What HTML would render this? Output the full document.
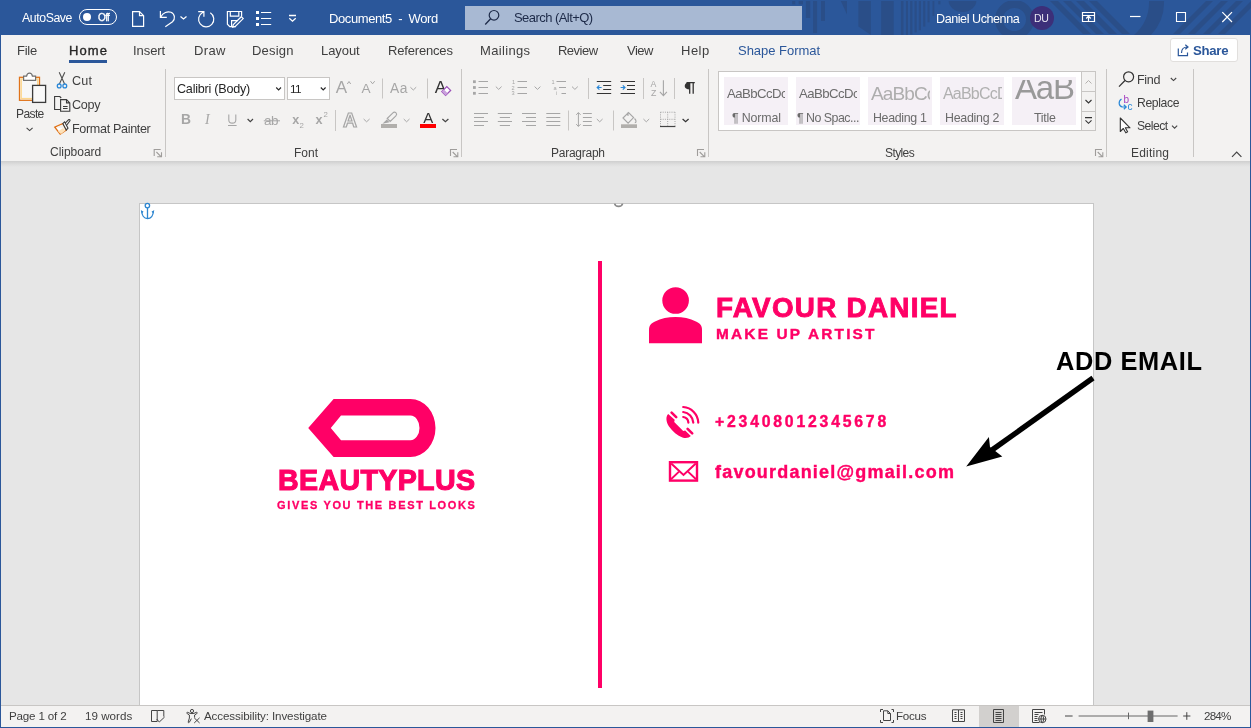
<!DOCTYPE html>
<html><head><meta charset="utf-8"><style>
*{box-sizing:border-box}
html,body{margin:0;padding:0;width:1251px;height:728px;overflow:hidden;background:#e6e6e6;font-family:"Liberation Sans",sans-serif;position:relative}
.a{position:absolute}
.t{position:absolute;white-space:pre;line-height:normal;font-family:"Liberation Sans",sans-serif;will-change:transform}
svg{position:absolute;overflow:visible}
</style></head><body>
<!-- base regions -->
<div class="a" style="left:0;top:0;width:1251px;height:35px;background:#2b579a"></div>
<div class="a" style="left:0;top:35px;width:1251px;height:126px;background:#f3f2f1"></div>
<div class="a" style="left:0;top:161px;width:1251px;height:6px;background:linear-gradient(rgba(0,0,0,0.1),rgba(0,0,0,0.03) 60%,rgba(0,0,0,0))"></div>
<div class="a" style="left:139px;top:203px;width:955px;height:520px;background:#fff;border:1px solid #c6c6c6"></div>
<div class="a" style="left:0;top:705px;width:1251px;height:23px;background:#f3f2f1;border-top:1px solid #c8c6c4"></div>
<div class="a" style="left:0;top:727px;width:1251px;height:1px;background:#2b579a"></div>
<div class="a" style="left:0;top:34px;width:1px;height:694px;background:#2b579a"></div>
<div class="a" style="left:1250px;top:34px;width:1px;height:694px;background:#2b579a"></div>

<!-- title bar pattern -->
<svg style="left:0;top:0" width="1251" height="35" viewBox="0 0 1251 35">
 <defs><clipPath id="tb"><rect x="0" y="1" width="1251" height="34"/></clipPath></defs>
 <g clip-path="url(#tb)" fill="#2a4e88">
  <rect x="792.2" y="0" width="3" height="4.3"/>
  <rect x="798.7" y="0" width="4.3" height="4.3"/>
  <rect x="805.9" y="0" width="4.3" height="18"/>
  <rect x="813.1" y="0" width="4" height="33"/>
  <rect x="821" y="0" width="3.9" height="21"/>
  <path d="M840.4 0 H847 V14.4 Z"/>
  <path d="M858.4 0 H870.9 V35 L858.4 26.6 Z"/>
  <rect x="881.2" y="0" width="12.5" height="35"/>
  <rect x="900.9" y="0" width="2.6" height="35"/>
  <rect x="905.9" y="0" width="2.1" height="35"/>
  <rect x="910.2" y="0" width="2.2" height="34.5"/>
  <rect x="914.5" y="0" width="2.2" height="32.4"/>
  <rect x="918.8" y="0" width="2.2" height="30.2"/>
  <rect x="923.2" y="0" width="2.1" height="26.6"/>
  <rect x="927.5" y="0" width="2.1" height="22.3"/>
  <rect x="932.5" y="0" width="1.8" height="15.8"/>
  <rect x="938.3" y="0" width="2.1" height="4.3"/>
  <path d="M948.5 0 A14 12 0 0 0 976.5 0 Z"/>
  <circle cx="1014.5" cy="19.5" r="15.5" fill="none" stroke="#2a4e88" stroke-width="8"/>
  <path d="M1049 0 L1057 0 L1091 34 L1083 34 Z"/>
  <path d="M1062 0 L1070 0 L1104 34 L1096 34 Z"/>
  <path d="M1075 0 L1083 0 L1117 34 L1109 34 Z"/>
  <path d="M1088 0 L1096 0 L1130 34 L1122 34 Z"/>
  <path d="M1164 0 A48 48 0 0 1 1151 35 L1134 35 A44 44 0 0 0 1149 0 Z"/>
  <path d="M1173 34 L1207 0 L1214 0 L1180 34 Z"/>
  <path d="M1188 34 L1222 0 L1229 0 L1195 34 Z"/>
  <path d="M1203 34 L1237 0 L1244 0 L1210 34 Z"/>
  <path d="M1218 34 L1252 0 L1259 0 L1225 34 Z"/>
 </g>
</svg>
<!-- search box -->
<div class="a" style="left:465px;top:6px;width:337px;height:24px;background:#a8b9d3"></div>
<div class="a" style="left:1030px;top:6px;width:24px;height:24px;border-radius:50%;background:#3c2f79"></div>
<!-- toggle -->
<div class="a" style="left:79px;top:9px;width:38px;height:16px;border:1.2px solid #fff;border-radius:8px"></div>
<div class="a" style="left:82.5px;top:12.8px;width:8.5px;height:8.5px;border-radius:50%;background:#fff"></div>
<svg style="left:0;top:0" width="1251" height="35" viewBox="0 0 1251 35" fill="none" stroke="#fff" stroke-width="1.2">
 <!-- new doc -->
 <path d="M132.6 11.6 H139.5 L143.6 15.7 V26.4 H132.6 Z M139.5 11.6 V15.7 H143.6"/>
 <!-- undo -->
 <path d="M160.4 11 V17.3 H166.8 M160.9 16.8 C 163 12.8 167.5 10.8 171 12.3 C 175 14 175.5 19 172.5 21.8 L165.3 26.8"/>
 <path d="M180.5 16.5 L183.5 19 L186.5 16.5"/>
 <!-- redo -->
 <path d="M198.2 11.6 H203.9 V16.8 M203.4 12.1 L202.6 12.5 A7.6 7.6 0 1 0 210.3 12.8"/>
 <!-- save with pen -->
 <path d="M236 26.6 H229.8 L227.4 24.2 V11.5 H241.6 V16.6 M230.3 11.5 V16.2 H238.8 V11.5 M231.6 26.4 V20.6 H237.6"/>
 <path d="M241.3 16.7 L243.2 18.6 L235.3 26.5 L232.6 27.2 L233.3 24.6 Z"/>
 <!-- list -->
 <path d="M261 12.5 H271.2 M261 18.5 H271.2 M261 24.5 H271.2"/>
 <path d="M289 15.5 H296 M289.3 18.3 L292.5 21.2 L295.7 18.3" stroke-width="1.3"/>
 <!-- search -->
 <circle cx="494" cy="15.3" r="4.8" stroke="#1d2a48" stroke-width="1.2"/>
 <path d="M490.6 18.8 L485.2 24.5" stroke="#1d2a48" stroke-width="1.3"/>
 <!-- ribbon display -->
 <path d="M1082.5 12.5 H1094.5 V21.5 H1082.5 Z M1082.5 15.5 H1094.5 M1088.5 21.6 V16.3 M1086.2 18.5 L1088.5 16.2 L1090.8 18.5"/>
 <path d="M1130 16.5 H1140.5"/>
 <path d="M1176.5 12.5 H1185.5 V21.5 H1176.5 Z" stroke-width="1.1"/>
 <path d="M1222.3 12.2 L1232 22 M1232 12.2 L1222.3 22"/>
</svg>
<svg style="left:0;top:0" width="300" height="35" fill="#fff">
 <rect x="256" y="11" width="3" height="3"/><rect x="256" y="17" width="3" height="3"/><rect x="256" y="23" width="3" height="3"/>
</svg>

<!-- Home underline -->
<div class="a" style="left:69px;top:60px;width:38px;height:3px;background:#2b579a"></div>
<!-- share button -->
<div class="a" style="left:1170px;top:38px;width:67.5px;height:24px;background:#fff;border:1px solid #e1dfdd;border-radius:3px"></div>
<!-- font boxes -->
<div class="a" style="left:174px;top:77px;width:111px;height:23px;background:#fff;border:1px solid #c8c6c4"></div>
<div class="a" style="left:287px;top:77px;width:43px;height:23px;background:#fff;border:1px solid #c8c6c4"></div>
<!-- styles gallery -->
<div class="a" style="left:718px;top:71px;width:378px;height:60px;background:#fff;border:1px solid #c8c6c4"></div>
<div class="a" style="left:724px;top:77px;width:64px;height:48px;background:#f5f0f6"></div>
<div class="a" style="left:796px;top:77px;width:64px;height:48px;background:#f5f0f6"></div>
<div class="a" style="left:868px;top:77px;width:64px;height:48px;background:#f5f0f6"></div>
<div class="a" style="left:940px;top:77px;width:64px;height:48px;background:#f5f0f6"></div>
<div class="a" style="left:1012px;top:77px;width:64px;height:48px;background:#f5f0f6"></div>
<div class="a" style="left:1081px;top:71px;width:15px;height:21px;background:#f3f2f1;border:1px solid #c8c6c4"></div>
<div class="a" style="left:1081px;top:91px;width:15px;height:21px;background:#f3f2f1;border:1px solid #c8c6c4"></div>
<div class="a" style="left:1081px;top:111px;width:15px;height:20px;background:#f3f2f1;border:1px solid #c8c6c4"></div>
<!-- gallery preview texts (clipped) -->
<div class="a" style="left:726px;top:77px;width:59px;height:48px;overflow:hidden"><div class="t" style="left:0.5px;top:9px;font-size:13.2px;color:#6b6b6b;letter-spacing:-0.55px">AaBbCcDc</div></div>
<div class="a" style="left:798px;top:77px;width:59px;height:48px;overflow:hidden"><div class="t" style="left:0.5px;top:9px;font-size:13.2px;color:#6b6b6b;letter-spacing:-0.55px">AaBbCcDc</div></div>
<div class="a" style="left:870px;top:77px;width:59.5px;height:48px;overflow:hidden"><div class="t" style="left:0.5px;top:5.5px;font-size:19px;color:#adadad;letter-spacing:-0.9px">AaBbCc</div></div>
<div class="a" style="left:942px;top:77px;width:59.5px;height:48px;overflow:hidden"><div class="t" style="left:0.5px;top:7.5px;font-size:16px;color:#b0b0b0;letter-spacing:-0.8px">AaBbCcD</div></div>
<div class="a" style="left:1012px;top:80px;width:64px;height:45px;overflow:hidden"><div class="t" style="left:2.5px;top:-11px;font-size:33px;color:#999999;letter-spacing:-1.2px">AaB</div></div>

<svg style="left:0;top:0" width="1251" height="170" viewBox="0 0 1251 170" fill="none">
 <!-- separators -->
 <g stroke="#c8c6c4" stroke-width="1">
  <path d="M165.5 69 V157 M461.5 69 V157 M708.5 69 V157 M1106.5 69 V157 M1193.5 69 V157"/>
  <path d="M382.5 78.5 V98.5 M427.5 78.5 V98.5 M335.5 110 V131"/>
  <path d="M588.5 78 V99 M643.5 78 V99 M674.5 78 V99 M568.5 110.5 V130.5 M613.5 110.5 V130.5"/>
 </g>
 <!-- launchers -->
 <path stroke="#9f9d9b" stroke-width="1.1" d="M154.2 156 V149.5 H160.7 M156.39999999999998 152 L161.0 156.6 M161.5 152.3 V156.7 H157.2 M450.5 156 V149.5 H457.0 M452.7 152 L457.3 156.6 M457.8 152.3 V156.7 H453.5 M697.5 156 V149.5 H704.0 M699.7 152 L704.3 156.6 M704.8 152.3 V156.7 H700.5 M1095.5 156 V149.5 H1102.0 M1097.7 152 L1102.3 156.6 M1102.8 152.3 V156.7 H1098.5"/>
 <!-- paste -->
 <rect x="19.5" y="77.3" width="20" height="23" fill="#f7f7f7" stroke="#e0731a" stroke-width="1.3"/>
 <rect x="21.2" y="79" width="16.6" height="19.6" fill="none" stroke="#fcd68c" stroke-width="1.4"/>
 <path d="M23.6 80.4 V76.2 H26.6 C 27.2 72.2 31.8 72.2 32.4 76.2 H35.6 V80.4 Z" fill="#fff" stroke="#707070" stroke-width="1.2"/>
 <rect x="32.6" y="85.4" width="13" height="17" fill="#f9f9f9" stroke="#3b3b3b" stroke-width="1.3"/>
 <path d="M26.6 127.8 L29.6 130.6 L32.6 127.8" stroke="#444" stroke-width="1.1"/>
 <!-- scissors -->
 <path d="M59.2 72.3 L64.6 84 M64.8 72.3 L59.4 84" stroke="#505050" stroke-width="1.1"/>
 <circle cx="59.2" cy="85.9" r="1.9" stroke="#2b88d8" stroke-width="1.3"/>
 <circle cx="64.8" cy="85.9" r="1.9" stroke="#2b88d8" stroke-width="1.3"/>
 <!-- copy -->
 <path d="M60.5 109.5 H54.6 V96.5 H59.8 L61.2 98" stroke="#3b3b3b" stroke-width="1.1"/>
 <path d="M60.6 99.6 H66.5 L69.8 102.9 V111.3 H60.6 Z M66.5 99.6 V102.9 H69.8 M63 106.5 H67.6 M63 108.5 H67.6" stroke="#3b3b3b" stroke-width="1.1"/>
 <!-- format painter -->
 <path d="M54.8 127.2 L62.8 123.6 L66.3 130 L60.2 134.2 Z" fill="#fff" stroke="#e0731a" stroke-width="1.3"/>
 <path d="M56 127.5 L62.5 124.5 L64.5 128 Z" fill="#f4f0ea"/>
 <path d="M58 131.5 L61 134 L65.5 130.5 L63 128 Z" fill="#fde1b9"/>
 <path d="M62.8 123.6 L64.6 121.8 L68 128.2 L66.3 130 Z" fill="#fff" stroke="#3b3b3b" stroke-width="1.1"/>
 <path d="M65.2 123.2 L68.4 119.8 C 69.4 119 70.6 120 69.8 121 L 66.8 125" stroke="#3b3b3b" stroke-width="1.1"/>
 <!-- font box chevrons -->
 <path d="M276.2 87.5 L278.6 90 L281 87.5 M320.8 87.5 L323.2 90 L325.6 87.5" stroke="#262626" stroke-width="1.1"/>
 <!-- grow/shrink/case chevrons -->
 <path d="M347.3 84 L349 81.5 L350.7 84 M370.5 81.2 L372.6 83.8 L374.7 81.2 M410.4 87.2 L413.3 90 L416.2 87.2" stroke="#a6a6a6" stroke-width="1"/>
 <text x="335.8" y="92.8" font-family="Liberation Sans" font-size="17" fill="#a6a6a6">A</text>
 <text x="361.4" y="92.8" font-family="Liberation Sans" font-size="13.6" fill="#a6a6a6">A</text>
 <text x="390" y="92.8" font-family="Liberation Sans" font-size="13.8" fill="#a6a6a6" letter-spacing="0.5">Aa</text>
 <text x="434.8" y="92.8" font-family="Liberation Sans" font-size="17.2" fill="#333">A</text>
 <path d="M441.8 91.6 L446.8 86.6 L450.6 90.4 L445.6 95.4 Z" fill="#fff" stroke="#9b4fb8" stroke-width="1.3"/>
 <path d="M441.8 91.6 L443.9 89.5 L447.7 93.3 L445.6 95.4 Z" fill="#c9a0dc"/>
 <!-- B I U -->
 <text x="181" y="124.4" font-family="Liberation Sans" font-weight="700" font-size="13.8" fill="#a6a6a6">B</text>
 <text x="205" y="124.4" font-family="Liberation Serif" font-style="italic" font-size="14" fill="#a6a6a6">I</text>
 <path d="M228.8 114.6 V120 C 228.8 124.2 235.8 124.2 235.8 120 V114.6 M228 125.5 H236.6" stroke="#a6a6a6" stroke-width="1.1"/>
 <path d="M247.6 119 L250.3 121.6 L253 119" stroke="#444" stroke-width="1.2"/>
 <text x="264" y="124.6" font-family="Liberation Sans" font-size="13.5" fill="#a6a6a6" letter-spacing="-0.4">ab</text>
 <path d="M263.8 120.8 H280" stroke="#a6a6a6" stroke-width="1"/>
 <text x="292.3" y="124" font-family="Liberation Sans" font-weight="700" font-size="12.6" fill="#a6a6a6">x</text>
 <text x="299.5" y="127.7" font-family="Liberation Sans" font-size="7.8" fill="#a6a6a6">2</text>
 <text x="315.6" y="124" font-family="Liberation Sans" font-weight="700" font-size="12.6" fill="#a6a6a6">x</text>
 <text x="323.5" y="117.3" font-family="Liberation Sans" font-size="7.8" fill="#a6a6a6">2</text>
 <!-- text effects -->
 <text x="343" y="126.6" font-family="Liberation Sans" font-weight="700" font-size="19.5" fill="#f3f2f1" stroke="#a6a6a6" stroke-width="1.2">A</text>
 <path d="M363.6 119 L366.6 121.8 L369.6 119 M403.7 119 L406.6 121.8 L409.5 119" stroke="#a6a6a6" stroke-width="1"/>
 <!-- highlighter -->
 <g transform="translate(0 1)"> <path d="M387.2 117.5 L392.9 111.8 C 393.8 110.9 395 110.9 395.8 111.7 L 396 111.9 C 396.8 112.7 396.8 113.9 395.9 114.8 L 390.2 120.5 Z" fill="#f3f2f1" stroke="#a6a6a6" stroke-width="1.1"/>
 <path d="M386.8 118.4 L389.6 121.2 L382.4 122.8 Z" fill="#a6a6a6"/>
 </g>
 <rect x="381" y="124" width="16" height="4" fill="#b1afac"/>
 <!-- font color -->
 <text x="423.2" y="122.9" font-family="Liberation Sans" font-size="15" fill="#333">A</text>
 <rect x="420" y="124" width="16" height="4" fill="#f00"/>
 <path d="M442.4 119 L445.4 121.8 L448.4 119" stroke="#444" stroke-width="1.2"/>
 <!-- paragraph row1 -->
 <g fill="#a6a6a6">
  <rect x="473" y="80.3" width="2.8" height="2.8"/><rect x="473" y="86.1" width="2.8" height="2.8"/><rect x="473" y="91.9" width="2.8" height="2.8"/>
 </g>
 <path d="M478.5 81.5 H488 M478.5 87.5 H488 M478.5 93.5 H488 M517.5 81.5 H527 M517.5 87.5 H527 M517.5 93.5 H527 M556.5 81.5 H566 M559 87.5 H566 M561.5 93.5 H566" stroke="#a6a6a6" stroke-width="1"/>
 <path d="M495.8 86.6 L498.7 89.4 L501.6 86.6 M534.6 86.6 L537.5 89.4 L540.4 86.6 M572 86.6 L574.9 89.4 L577.8 86.6" stroke="#a6a6a6" stroke-width="1"/>
 <g font-family="Liberation Sans" font-size="5.6" fill="#a6a6a6">
  <text x="512" y="83.8">1</text><text x="511.6" y="89.6">2</text><text x="511.6" y="95.4">3</text>
  <text x="551.5" y="83.8">1</text><text x="553.5" y="89.6">a</text><text x="556" y="95.4">i</text>
 </g>
 <!-- indents -->
 <path d="M596.8 81.5 H611.2 M603.2 85.5 H611.2 M603.2 89.5 H611.2 M596.8 93.5 H611.2 M620.6 81.5 H635 M627 85.5 H635 M627 89.5 H635 M620.6 93.5 H635" stroke="#333" stroke-width="1"/>
 <path d="M601.6 87.5 H597.2 M599.4 85.3 L597.2 87.5 L599.4 89.7 M620.6 87.5 H625 M622.8 85.3 L625 87.5 L622.8 89.7" stroke="#2b88d8" stroke-width="1.2"/>
 <!-- sort -->
 <text x="650.6" y="86.6" font-family="Liberation Sans" font-size="8.8" fill="#a6a6a6">A</text>
 <text x="650.9" y="95.8" font-family="Liberation Sans" font-size="8.8" fill="#a6a6a6">Z</text>
 <path d="M663.4 80.2 V95.4 M659.9 91.8 L663.4 95.6 L666.9 91.8" stroke="#a6a6a6" stroke-width="1.1"/>
 <!-- pilcrow -->
 <path d="M690 82.3 C 686.5 82.3 684.7 84 684.7 86 C 684.7 88 686.5 89.6 690 89.6 Z" fill="#333"/>
 <path d="M686.5 82.6 H694.8 M689.7 82.6 V93.8 M693.2 82.6 V93.8" stroke="#333" stroke-width="1.3"/>
 <!-- align row2 -->
 <path d="M474 113.5 H488 M474 117.5 H484 M474 121.5 H488 M474 125.5 H484
          M497.8 113.5 H512 M499.8 117.5 H510 M497.8 121.5 H512 M499.8 125.5 H510
          M522 113.5 H536 M526 117.5 H536 M522 121.5 H536 M526 125.5 H536
          M546.3 113.5 H560.3 M546.3 117.5 H560.3 M546.3 121.5 H560.3 M546.3 125.5 H560.3" stroke="#a6a6a6" stroke-width="1"/>
 <!-- line spacing -->
 <path d="M582.9 113.5 H591.8 M582.9 117.5 H591.8 M582.9 121.5 H591.8 M582.9 125.5 H591.8 M578.4 112.6 V126.4 M576.2 114.8 L578.4 112.6 L580.6 114.8 M576.2 124.2 L578.4 126.4 L580.6 124.2" stroke="#a6a6a6" stroke-width="1"/>
 <path d="M596.8 119 L599.7 121.8 L602.6 119 M643.4 119 L646.3 121.8 L649.2 119" stroke="#a6a6a6" stroke-width="1"/>
 <!-- shading -->
 <path d="M623 118 L628.5 112.5 L633.6 117.6 L628.1 123.1 Z M628 112.2 V116 M634.5 118.5 C 636.5 120.5 636.5 122.5 634.8 122.8" stroke="#a6a6a6" stroke-width="1.1"/>
 <rect x="621" y="124.3" width="16" height="3.7" fill="#b1afac"/>
 <!-- borders -->
 <path d="M660.5 112.2 H675 M660.5 119.3 H675 M660.5 112.2 V126 M675 112.2 V126 M667.7 112.2 V126" stroke="#a6a6a6" stroke-width="1" stroke-dasharray="1 1.2"/>
 <path d="M660 126.5 H675.4" stroke="#444" stroke-width="1.2"/>
 <path d="M682.6 119 L685.6 121.8 L688.6 119" stroke="#333" stroke-width="1.2"/>
 <!-- gallery scroll arrows -->
 <path d="M1085.5 83.5 L1088.5 80.5 L1091.5 83.5" stroke="#b3b0ad" stroke-width="1"/>
 <path d="M1085.5 100 L1088.5 103 L1091.5 100" stroke="#333" stroke-width="1.1"/>
 <path d="M1085 117.6 H1092 M1085.5 120.3 L1088.5 123.3 L1091.5 120.3" stroke="#333" stroke-width="1.1"/>
 <!-- find / replace / select -->
 <circle cx="1128.6" cy="76.8" r="5" stroke="#333" stroke-width="1.2"/>
 <path d="M1125 80.5 L1119 86.6" stroke="#333" stroke-width="1.3"/>
 <path d="M1170.8 78 L1173.5 80.6 L1176.2 78 M1172 125.6 L1174.6 128.2 L1177.2 125.6" stroke="#444" stroke-width="1.1"/>
 <text x="1123.4" y="102.6" font-family="Liberation Sans" font-size="10" fill="#a33fc0">b</text>
 <text x="1127.6" y="109.8" font-family="Liberation Sans" font-size="10" fill="#2b88d8">c</text>
 <path d="M1121.5 99 C 1118 101.5 1118.5 106 1122.5 107 H1126 M1123.8 104.8 L1126.2 107 L1123.8 109.2" stroke="#2b88d8" stroke-width="1.2"/>
 <path d="M1120.3 118 V131.5 L1123.3 128.5 L1125.8 132.8 L1127.6 131.8 L1125.3 127.8 H1130 Z" stroke="#333" stroke-width="1.1" fill="#fff" stroke-linejoin="round"/>
 <!-- share icon -->
 <path d="M1178.3 48.5 V55.6 H1187.5 V52.5 M1181.5 53 C 1181.5 48.5 1184 47 1187.5 47 M1185.3 44.8 L1188 47 L1185.3 49.3" stroke="#2b579a" stroke-width="1.2"/>
 <!-- collapse chevron -->
 <path d="M1232 156.8 L1236.7 152.1 L1241.4 156.8" stroke="#444" stroke-width="1.2"/>
</svg>

<svg style="left:0;top:0" width="1251" height="728" viewBox="0 0 1251 728" fill="none">
 <!-- anchor -->
 <g stroke="#2d86d0" stroke-width="1.3">
  <circle cx="147.4" cy="205.6" r="2.2"/>
  <path d="M147.5 207.8 V218.6 M141.8 211 C 141.8 215.5 144 218.6 147.5 218.6 C 151 218.6 153.3 215.5 153.3 211"/>
 </g>
 <path d="M140.8 210 L143.6 211.8 L141.6 213.5 Z M154.3 210 L151.5 211.8 L153.5 213.5 Z" fill="#2d86d0"/>
 <!-- rotation handle (bottom arc) -->
 <path d="M614.6 203.6 A4.1 3.6 0 0 0 622.6 203.6" stroke="#8a8a8a" stroke-width="1.7"/>
 <!-- logo -->
 <path fill="#ff0066" fill-rule="evenodd" d="M333.6 399 H410.5 A25 29 0 0 1 410.5 457 H333.6 L308.2 428 Z M341 415.6 H410.5 A9 12.3 0 0 1 410.5 440.2 H341 L330.8 428 Z"/>
 <!-- vertical line -->
 <rect x="598" y="261" width="4" height="427" fill="#ff0066"/>
 <!-- person -->
 <circle cx="675.6" cy="300.5" r="13.3" fill="#ff0066"/>
 <path fill="#ff0066" d="M649 343.3 V330 C 649 325.5 651 323.5 655 321.6 C 661 318.5 668 317.1 675.5 317.1 C 683 317.1 690 318.5 696 321.6 C 700 323.5 702 325.5 702 330 V343.3 Z"/>
 <!-- phone -->
 <g fill="#ff0066">
  <path d="M668.2 414 C 665.5 416.5 666 422 669 426.5 C 672.5 431.5 677.5 435.5 682.5 437.5 C 686 438.6 689.2 437.8 690.8 436 L 685.2 430.5 L 683.2 431 L 674.2 422 L 674.7 419.8 Z"/>
 </g>
 <g stroke="#ff0066" stroke-width="2.6" stroke-linecap="round">
  <path d="M671.6 412.6 L676.2 417.2 M687.6 428.8 L692.2 433.4"/>
 </g>
 <g stroke="#ff0066" stroke-width="2.2" stroke-linecap="round">
  <path d="M683.2 417 A6.2 6.2 0 0 1 688.4 422.6"/>
  <path d="M683.2 412 A11.2 11.2 0 0 1 693.3 422.6"/>
  <path d="M683.2 407 A16.2 16.2 0 0 1 698.3 422.6"/>
 </g>
 <!-- envelope -->
 <g stroke="#ff0066">
  <rect x="670" y="462.2" width="27" height="18.4" stroke-width="2.4"/>
  <path d="M671.2 463.4 L683.5 475 L695.8 463.4" stroke-width="2"/>
  <path d="M671 479.2 L679 471.6 M696 479.2 L688 471.6" stroke-width="1.9"/>
 </g>
 <!-- arrow -->
 <path d="M1093 378 L992 450" stroke="#000" stroke-width="5.4"/>
 <path fill="#000" d="M966.2 466.6 L988.9 437.1 L990 447 L1002.3 456.5 Z"/>
</svg>

<div class="a" style="left:979px;top:706px;width:40px;height:21px;background:#d2d0ce"></div>
<svg style="left:0;top:0" width="1251" height="728" viewBox="0 0 1251 728" fill="none">
 <g stroke="#444" stroke-width="1">
  <!-- book with check -->
  <path d="M157.2 721.5 H151.5 V710.5 H157.2 Z M157.2 710.5 H163.8 V716.6 M156.6 719 L159.3 722 L164.6 717"/>
  <!-- accessibility -->
  <circle cx="192" cy="711" r="1.6"/>
  <path d="M187.2 713.6 C 186.2 713 186.8 712 187.8 712.4 C 189.5 713.3 190.5 713.6 192 713.6 C 193.5 713.6 194.5 713.3 196.2 712.4 C 197.2 712 197.8 713 196.8 713.6 L194.6 715 L194.6 717.5 M189.4 715 L189.4 718 L188.2 722 C 188 722.8 189 723 189.3 722.3 L191.4 718.6 M187.2 713.6 L189.4 715"/>
  <path d="M194.2 717.8 L199.6 723 M199.6 717.8 L194.2 723"/>
  <!-- focus -->
  <path d="M880.5 712 V709.5 H883 M891.5 709.5 H893.5 V712 M893.5 720 V722.5 H891.5 M883 722.5 H880.5 V720"/>
  <path d="M883.5 710.8 H887.8 L890.5 713.5 V720.5 H883.5 Z M887.8 710.8 V713.5 H890.5"/>
  <!-- read mode -->
  <path d="M952.5 709.8 H958.5 V721.5 H952.5 Z M958.5 709.8 H964.5 V721.5 H958.5 M954.5 712.5 H956.5 M954.5 714.5 H956.5 M954.5 716.5 H956.5 M954.5 718.5 H956.5 M960.5 712.5 H962.5 M960.5 714.5 H962.5 M960.5 716.5 H962.5 M960.5 718.5 H962.5"/>
  <!-- print layout -->
  <path d="M993.5 709.5 H1003.5 V722.5 H993.5 Z M995.5 712.5 H1001.5 M995.5 714.5 H1001.5 M995.5 716.5 H1001.5 M995.5 718.5 H1001.5 M995.5 720.5 H1001.5"/>
  <!-- web layout -->
  <path d="M1039.5 722.5 H1032.5 V709.5 H1044.5 V714.5 M1034.5 712.5 H1042.5 M1034.5 714.5 H1038.5 M1034.5 716.5 H1037.5 M1034.5 718.5 H1037.5 M1034.5 720.5 H1037.5"/>
  <circle cx="1042.3" cy="719" r="3.7" fill="#f3f2f1"/>
  <path d="M1038.6 719 H1046 M1042.3 715.3 C 1040.5 717 1040.5 721 1042.3 722.7 C 1044.1 721 1044.1 717 1042.3 715.3"/>
  <!-- zoom -->
  <path d="M1065 716 H1072.6 M1183.2 716 H1190.4 M1186.8 712.2 V719.8"/>
 </g>
 <path d="M1078.6 716 H1177.6" stroke="#666" stroke-width="1"/>
 <path d="M1128.5 712.6 V719.2" stroke="#666" stroke-width="1"/>
 <rect x="1147.6" y="710.6" width="5.8" height="11.4" fill="#6e6e6e"/>
</svg>

<div class="t" style="left:22.00px;top:11.20px;font-size:12.3px;font-weight:400;color:#fff;letter-spacing:-0.414px;">AutoSave</div>
<div class="t" style="left:98.00px;top:12.20px;font-size:10px;font-weight:400;color:#fff;letter-spacing:-0.650px;-webkit-text-stroke:0.3px #fff;">Off</div>
<div class="t" style="left:329.40px;top:10.90px;font-size:13px;font-weight:400;color:#fff;letter-spacing:-0.406px;white-space:pre;">Document5  -  Word</div>
<div class="t" style="left:513.80px;top:10.40px;font-size:13px;font-weight:400;color:#1d2a48;letter-spacing:-0.554px;">Search (Alt+Q)</div>
<div class="t" style="left:935.60px;top:12.00px;font-size:12.6px;font-weight:400;color:#fff;letter-spacing:-0.454px;">Daniel Uchenna</div>
<div class="t" style="left:1033.80px;top:12.00px;font-size:10.6px;font-weight:400;color:#e8e6f0;letter-spacing:-0.300px;">DU</div>
<div class="t" style="left:17.40px;top:43.00px;font-size:13px;font-weight:400;color:#3f3f3f;letter-spacing:-0.267px;">File</div>
<div class="t" style="left:68.60px;top:43.00px;font-size:13px;font-weight:400;color:#262626;letter-spacing:1.100px;-webkit-text-stroke:0.35px #262626;">Home</div>
<div class="t" style="left:133.00px;top:43.00px;font-size:13px;font-weight:400;color:#3f3f3f;letter-spacing:-0.060px;">Insert</div>
<div class="t" style="left:194.00px;top:43.00px;font-size:13px;font-weight:400;color:#3f3f3f;letter-spacing:0.333px;">Draw</div>
<div class="t" style="left:252.00px;top:43.00px;font-size:13px;font-weight:400;color:#3f3f3f;letter-spacing:0.200px;">Design</div>
<div class="t" style="left:321.20px;top:43.00px;font-size:13px;font-weight:400;color:#3f3f3f;letter-spacing:-0.060px;">Layout</div>
<div class="t" style="left:388.40px;top:43.00px;font-size:13px;font-weight:400;color:#3f3f3f;letter-spacing:-0.178px;">References</div>
<div class="t" style="left:480.30px;top:43.00px;font-size:13px;font-weight:400;color:#3f3f3f;letter-spacing:0.343px;">Mailings</div>
<div class="t" style="left:558.40px;top:43.00px;font-size:13px;font-weight:400;color:#3f3f3f;letter-spacing:-0.520px;">Review</div>
<div class="t" style="left:627.20px;top:43.00px;font-size:13px;font-weight:400;color:#3f3f3f;letter-spacing:-0.533px;">View</div>
<div class="t" style="left:681.00px;top:43.00px;font-size:13px;font-weight:400;color:#3f3f3f;letter-spacing:0.500px;">Help</div>
<div class="t" style="left:738.00px;top:43.00px;font-size:13px;font-weight:400;color:#2b579a;letter-spacing:-0.027px;">Shape Format</div>
<div class="t" style="left:1192.90px;top:43.00px;font-size:13.2px;font-weight:700;color:#2b579a;letter-spacing:-0.275px;">Share</div>
<div class="t" style="left:15.70px;top:106.90px;font-size:12.1px;font-weight:400;color:#3f3f3f;letter-spacing:-0.650px;">Paste</div>
<div class="t" style="left:72.40px;top:73.90px;font-size:12.6px;font-weight:400;color:#3f3f3f;letter-spacing:0.200px;">Cut</div>
<div class="t" style="left:72.40px;top:98.20px;font-size:12.6px;font-weight:400;color:#3f3f3f;letter-spacing:-0.300px;">Copy</div>
<div class="t" style="left:72.40px;top:122.00px;font-size:12.6px;font-weight:400;color:#3f3f3f;letter-spacing:-0.346px;">Format Painter</div>
<div class="t" style="left:49.60px;top:145.30px;font-size:12px;font-weight:400;color:#3f3f3f;letter-spacing:-0.013px;">Clipboard</div>
<div class="t" style="left:176.50px;top:82.20px;font-size:12.6px;font-weight:400;color:#262626;letter-spacing:-0.231px;">Calibri (Body)</div>
<div class="t" style="left:289.90px;top:82.20px;font-size:11.8px;font-weight:400;color:#262626;letter-spacing:-0.700px;">11</div>
<div class="t" style="left:293.50px;top:145.70px;font-size:12px;font-weight:400;color:#3f3f3f;letter-spacing:0.000px;">Font</div>
<div class="t" style="left:550.50px;top:146.00px;font-size:12px;font-weight:400;color:#3f3f3f;letter-spacing:-0.250px;">Paragraph</div>
<div class="t" style="left:884.60px;top:146.00px;font-size:12px;font-weight:400;color:#3f3f3f;letter-spacing:-0.600px;">Styles</div>
<div class="t" style="left:1131.10px;top:145.70px;font-size:12px;font-weight:400;color:#3f3f3f;letter-spacing:0.217px;">Editing</div>
<div class="t" style="left:1136.50px;top:72.50px;font-size:12.6px;font-weight:400;color:#3f3f3f;letter-spacing:-0.367px;">Find</div>
<div class="t" style="left:1136.50px;top:96.30px;font-size:12.2px;font-weight:400;color:#3f3f3f;letter-spacing:-0.383px;">Replace</div>
<div class="t" style="left:1136.50px;top:119.00px;font-size:12.2px;font-weight:400;color:#3f3f3f;letter-spacing:-0.540px;">Select</div>
<div class="t" style="left:731.60px;top:110.80px;font-size:12.4px;font-weight:400;color:#6b6b6b;letter-spacing:-0.157px;">¶ Normal</div>
<div class="t" style="left:797.00px;top:110.80px;font-size:12.4px;font-weight:400;color:#6b6b6b;letter-spacing:-0.509px;">¶ No Spac...</div>
<div class="t" style="left:872.60px;top:111.40px;font-size:12.4px;font-weight:400;color:#6b6b6b;letter-spacing:-0.325px;">Heading 1</div>
<div class="t" style="left:944.50px;top:111.40px;font-size:12.4px;font-weight:400;color:#6b6b6b;letter-spacing:-0.250px;">Heading 2</div>
<div class="t" style="left:1033.90px;top:111.40px;font-size:12.4px;font-weight:400;color:#6b6b6b;letter-spacing:-0.275px;">Title</div>
<div class="t" style="left:8.50px;top:709.10px;font-size:11.6px;font-weight:400;color:#3f3f3f;letter-spacing:-0.170px;">Page 1 of 2</div>
<div class="t" style="left:84.60px;top:709.10px;font-size:11.6px;font-weight:400;color:#3f3f3f;letter-spacing:0.029px;">19 words</div>
<div class="t" style="left:204.30px;top:709.10px;font-size:11.6px;font-weight:400;color:#3f3f3f;letter-spacing:-0.108px;">Accessibility: Investigate</div>
<div class="t" style="left:896.40px;top:709.10px;font-size:11.6px;font-weight:400;color:#3f3f3f;letter-spacing:-0.250px;">Focus</div>
<div class="t" style="left:1204.40px;top:709.10px;font-size:11.6px;font-weight:400;color:#3f3f3f;letter-spacing:-0.800px;">284%</div>
<div class="t" style="left:277.80px;top:463.90px;font-size:28.6px;font-weight:700;color:#ff0066;letter-spacing:0.356px;-webkit-text-stroke:1.1px #ff0066;">BEAUTYPLUS</div>
<div class="t" style="left:277.40px;top:498.90px;font-size:11px;font-weight:700;color:#ff0066;letter-spacing:1.652px;-webkit-text-stroke:0.3px #ff0066;">GIVES YOU THE BEST LOOKS</div>
<div class="t" style="left:715.80px;top:291.90px;font-size:27.8px;font-weight:700;color:#ff0066;letter-spacing:1.300px;-webkit-text-stroke:0.9px #ff0066;">FAVOUR DANIEL</div>
<div class="t" style="left:716.30px;top:325.00px;font-size:15.4px;font-weight:700;color:#ff0066;letter-spacing:2.192px;-webkit-text-stroke:0.4px #ff0066;">MAKE UP ARTIST</div>
<div class="t" style="left:714.70px;top:413.30px;font-size:15.8px;font-weight:700;color:#ff0066;letter-spacing:2.786px;-webkit-text-stroke:0.4px #ff0066;">+23408012345678</div>
<div class="t" style="left:714.70px;top:461.80px;font-size:18px;font-weight:700;color:#ff0066;letter-spacing:1.205px;-webkit-text-stroke:0.4px #ff0066;">favourdaniel@gmail.com</div>
<div class="t" style="left:1056.20px;top:347.20px;font-size:25.4px;font-weight:700;color:#000;letter-spacing:0.612px;">ADD EMAIL</div>

</body></html>
